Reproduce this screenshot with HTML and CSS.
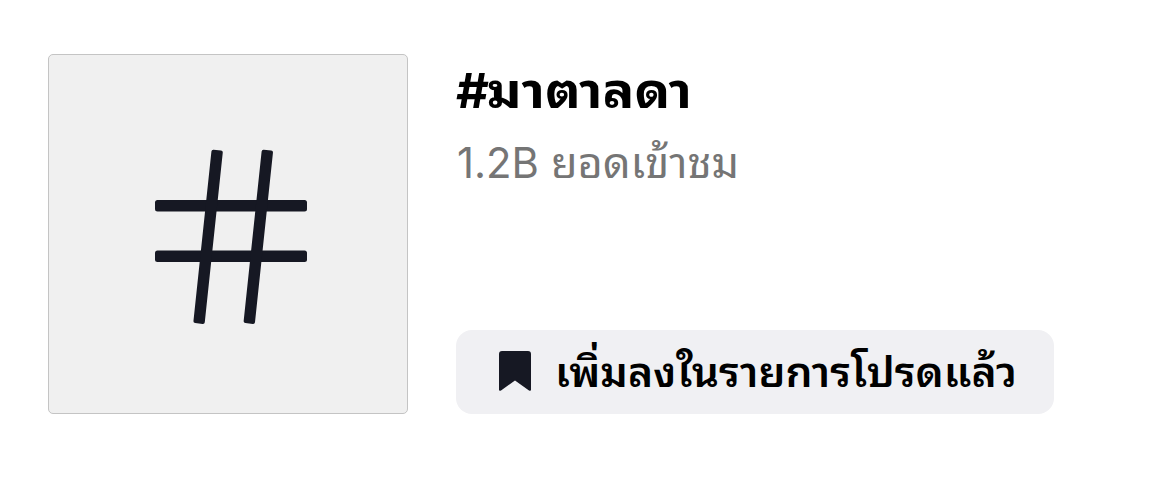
FILE: index.html
```html
<!DOCTYPE html>
<html lang="th">
<head>
<meta charset="utf-8">
<title>#มาตาลดา</title>
<link rel="stylesheet" href="styles.css">
</head>
<body>
<main class="header">
  <div class="cover">
    <svg class="hash" viewBox="0 0 154 176" width="154" height="176" aria-hidden="true">
      <rect x="1" y="51" width="152" height="11.500" rx="2.500"/>
      <rect x="1" y="101.500" width="152" height="11.500" rx="2.500"/>
      <rect x="48.400" y="0.600" width="11.400" height="174.400" rx="2" transform="rotate(6.05 54.100 87.800)"/>
      <rect x="98.600" y="0.600" width="11.400" height="174.400" rx="2" transform="rotate(6.05 104.300 87.800)"/>
    </svg>
  </div>
  <section class="info">
    <h1 class="title"><svg class="text" width="240" height="60"><text x="0" y="53.500" textLength="33" lengthAdjust="spacingAndGlyphs">#</text><text x="31" y="53.500" textLength="205" lengthAdjust="spacingAndGlyphs">มาตาลดา</text></svg></h1>
    <p class="views"><svg class="text" width="290" height="60"><text x="1" y="50" textLength="82" lengthAdjust="spacingAndGlyphs">1.2B</text><text x="95" y="50" textLength="188" lengthAdjust="spacingAndGlyphs">ยอดเข้าชม</text></svg></p>
    <button class="favorite" type="button">
      <svg class="bookmark" viewBox="0 0 32 40" width="32" height="40"><path d="M3 0h26q3 0 3 3v35.500q0 2-2 1L16 29.500 2 39.500q-2 1-2-1V3q0-3 3-3Z"/></svg>
      <svg class="text" width="460" height="60"><text x="-3" y="45" textLength="462" lengthAdjust="spacingAndGlyphs">เพิ่มลงในรายการโปรดแล้ว</text></svg>
    </button>
  </section>
</main>
</body>
</html>
```
FILE: styles.css
```css
* { box-sizing: border-box; }
body { margin: 0; background: #fff; font-family: Inter, "Noto Sans Thai Looped", "Noto Looped Thai", Loma, Garuda, Waree, "Noto Sans Thai", "Noto Sans", sans-serif; }
.header { display: flex; gap: 48px; padding: 54px 48px; height: 478px; }
.cover { width: 360px; height: 360px; display: flex; align-items: center; justify-content: center; padding: 5px 0 0 5px; background: #f0f0f0; border: 1px solid #c4c4c4; border-radius: 5px; }
.hash { fill: #161823; }
.info { width: 598px; height: 360px; display: flex; flex-direction: column; }
.title, .views { margin: 0; height: 60px; }
.title { font-size: 48px; font-weight: 700; }
.views { font-size: 42px; color: #757575; margin-top: 14px; }
.text { display: block; fill: currentColor; overflow: visible; }
.favorite { margin-top: auto; width: 598px; height: 84px; border: 0; border-radius: 16px; background: #f0f0f3; display: flex; align-items: center; padding: 0 0 0 43px; gap: 27px; font-family: inherit; font-size: 42px; font-weight: 600; color: #000; }
.bookmark { fill: #161823; margin-bottom: 2px; }
```
